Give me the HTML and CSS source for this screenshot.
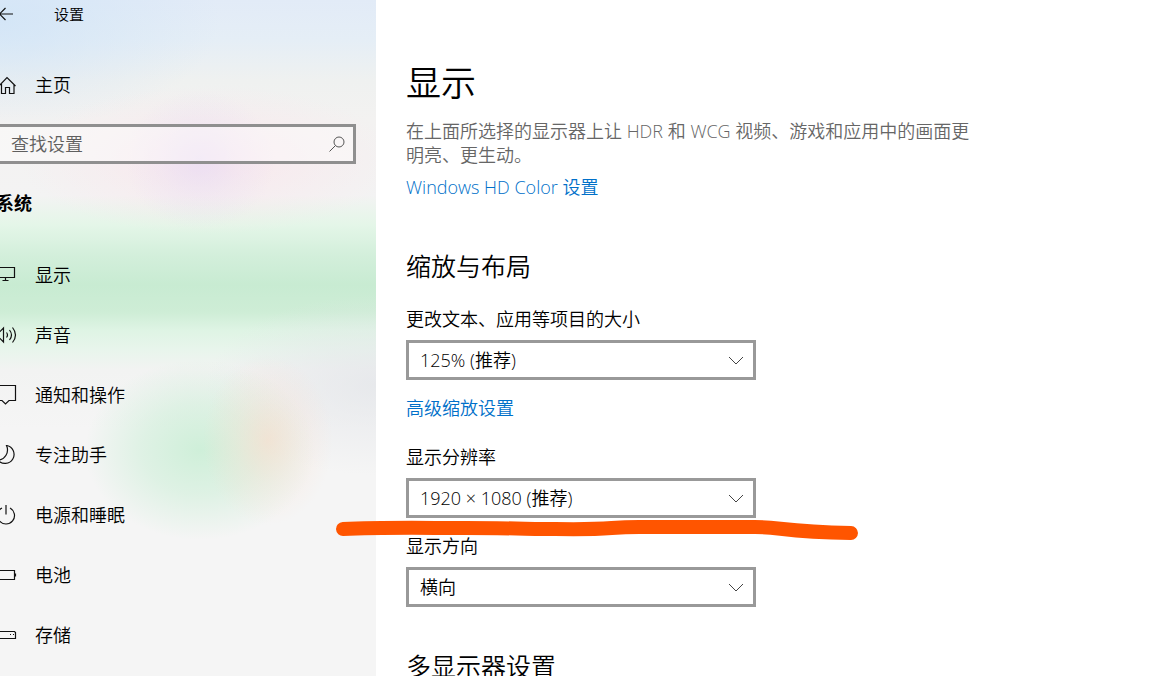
FILE: index.html
```html
<!DOCTYPE html>
<html lang="zh-CN">
<head>
    <meta charset="UTF-8">
    <meta name="viewport" content="width=device-width, initial-scale=1.0">
    <title>设置</title>
    <link rel="stylesheet" href="styles.css">
</head>
<body>

    <div class="window">
        <aside class="sidebar">
            <header class="titlebar">
                <button class="back-button" aria-label="返回">
                    <svg class="icon" viewBox="3 0 17 20"><path d="M16 10H2M8.500 4L2.500 10l6 6"/></svg>
                </button>
                <span class="app-title">设置</span>
            </header>

            <a class="nav-item home" href="#">
                <svg class="icon" viewBox="3 0 17 20"><path d="M2.500 10.500L10 2.500l8.500 8.500M4.500 9v9.500h4v-6h4v6h4.500V9.500"/></svg>
                <span>主页</span>
            </a>

            <div class="search">
                <input class="search-input" type="search" placeholder="查找设置" aria-label="查找设置">
                <svg class="search-icon" viewBox="0 0 16 16"><circle cx="10" cy="6" r="5"/><path d="M6.500 9.500L.5 15.500"/></svg>
            </div>

            <h2 class="section-title">系统</h2>

            <nav class="nav">
                <a class="nav-item" href="#">
                    <svg class="icon" viewBox="3 0 17 20"><path d="M0 2.500h17.500v10H0zM8.500 12.500v3M5.500 15.500h6"/></svg>
                    <span>显示</span>
                </a>
                <a class="nav-item" href="#">
                    <svg class="icon" viewBox="3 0 17 20"><path d="M0 7h2.500l4-4v14l-4-4H0M9.500 7.500q2 2.500 0 5M12.500 5q4 5 0 10M15.500 2.500q6 7.500 0 15"/></svg>
                    <span>声音</span>
                </a>
                <a class="nav-item" href="#">
                    <svg class="icon" viewBox="3 0 17 20"><path d="M0 .5h18.500v15H12l-3.500 3.500-3.500-3.500H0z"/></svg>
                    <span>通知和操作</span>
                </a>
                <a class="nav-item" href="#">
                    <svg class="icon" viewBox="3 0 17 20"><path d="M9.500 .5a9 9 0 1 1-8.500 14.500C8 15 12.500 7 9.500 .5z"/></svg>
                    <span>专注助手</span>
                </a>
                <a class="nav-item" href="#">
                    <svg class="icon" viewBox="3 0 17 20"><path d="M9 0v9.500M5 3a8.500 8.500 0 1 0 8 0"/></svg>
                    <span>电源和睡眠</span>
                </a>
                <a class="nav-item" href="#">
                    <svg class="icon" viewBox="3 0 17 20"><path d="M0 5.500h17.500v9H0zM18.500 8.500v3"/></svg>
                    <span>电池</span>
                </a>
                <a class="nav-item" href="#">
                    <svg class="icon" viewBox="3 0 17 20"><path d="M0 6.500h17.500l1 1v6H0M13 9.500h1M16 9.500h1"/></svg>
                    <span>存储</span>
                </a>
            </nav>
        </aside>

        <main class="content">
            <h1>显示</h1>
            <p class="description">在上面所选择的显示器上让 HDR 和 WCG 视频、游戏和应用中的画面更明亮、更生动。</p>
            <a class="link hd-link" href="#">Windows HD Color 设置</a>

            <h2>缩放与布局</h2>

            <label for="scale">更改文本、应用等项目的大小</label>
            <div class="select-box">
                <select id="scale">
                    <option>125% (推荐)</option>
                </select>
                <svg class="chevron" viewBox="0 0 16 10"><path d="M1 1l7 7 7-7"/></svg>
            </div>
            <a class="link scale-link" href="#">高级缩放设置</a>

            <label for="resolution">显示分辨率</label>
            <div class="select-box">
                <select id="resolution">
                    <option>1920 × 1080 (推荐)</option>
                </select>
                <svg class="chevron" viewBox="0 0 16 10"><path d="M1 1l7 7 7-7"/></svg>
                <!-- marker line under the resolution -->
                <svg class="marker" viewBox="0 0 524 24"><path d="M8 12C50 10 90 11 130 11S200 12 220 12C280 13 270 10 304 10H420C445 10 450 15 516 16"/></svg>
            </div>

            <label class="orientation-label" for="orientation">显示方向</label>
            <div class="select-box">
                <select id="orientation">
                    <option>横向</option>
                </select>
                <svg class="chevron" viewBox="0 0 16 10"><path d="M1 1l7 7 7-7"/></svg>
            </div>

            <h2 class="multi-title">多显示器设置</h2>
        </main>
    </div>

</body>
</html>
```
FILE: styles.css
```css
* {
    box-sizing: border-box;
}

body {
    margin: 0;
    font-family: "Open Sans", "Noto Sans CJK SC", sans-serif;
    font-size: 18px;
    font-weight: 350;
    line-height: 24px;
    color: #000;
    background-color: #fff;
}

.window {
    display: flex;
    height: 100vh;
    overflow: hidden;
}

h1, h2, p {
    margin: 0;
    font-weight: 350;
}

a {
    color: inherit;
    text-decoration: none;
}

/* sidebar */
.sidebar {
    flex: 0 0 376px;
    overflow: hidden;
    background:
        radial-gradient(ellipse 75px 70px at 200px 160px, rgba(226, 215, 246, 0.55), rgba(226, 215, 246, 0.2) 55%, rgba(226, 215, 246, 0)),
        radial-gradient(ellipse 190px 75px at 210px 160px, rgba(252, 226, 234, 0.7), rgba(252, 226, 234, 0.3) 55%, rgba(252, 226, 234, 0)),
        radial-gradient(ellipse 65px 85px at 268px 440px, rgba(250, 218, 200, 0.6), rgba(250, 218, 200, 0.25) 50%, rgba(250, 218, 200, 0)),
        radial-gradient(ellipse 115px 90px at 200px 450px, rgba(200, 238, 212, 0.85), rgba(200, 238, 212, 0.5) 50%, rgba(200, 238, 212, 0)),
        radial-gradient(ellipse 170px 90px at 376px 385px, rgba(228, 230, 234, 0.8), rgba(228, 230, 234, 0)),
        radial-gradient(ellipse 220px 110px at 0 20px, rgba(208, 228, 247, 0.8), rgba(208, 228, 247, 0.3) 60%, rgba(208, 228, 247, 0)),
        linear-gradient(#e2ebf7 0, #e5eef6 40px, #eff1f0 80px, #f3f2f1 120px, #f3f3f3 195px, #e4f6e8 225px, #d3efdb 255px, #c8ebd2 285px, #ceedd6 312px, #def4e4 330px, #e8f5ec 350px, #f2f3f2 370px, #f5f5f5 430px, #f5f5f5 100%);
}

.titlebar {
    display: flex;
    align-items: center;
    height: 28px;
    font-size: 15px;
}

.back-button {
    display: flex;
    width: 54px;
    padding: 0;
    border: none;
    background: none;
    cursor: pointer;
}

.icon {
    flex: none;
    width: 17px;
    height: 20px;
    fill: none;
    stroke: #111;
    stroke-width: 1.2;
}

.nav-item {
    display: flex;
    align-items: center;
    gap: 18px;
    height: 60px;
}

.home {
    margin-top: 27px;
}

.search {
    position: relative;
    margin: 9px 20px 0 -3px;
}

.search-input {
    display: block;
    width: 100%;
    height: 40px;
    padding: 0 40px 0 11px;
    border: 3px solid #8f8f8f;
    border-radius: 0;
    background-color: rgba(255, 255, 255, 0.4);
    font: inherit;
    outline: none;
}

.search-input::placeholder {
    color: #5f5f5f;
}

.search-icon {
    position: absolute;
    top: 12px;
    right: 11px;
    width: 16px;
    height: 16px;
    fill: none;
    stroke: #555;
}

.section-title {
    margin: 27px 0 30px -4px;
    font-size: 18px;
    font-weight: 700;
}

/* content */
.content {
    flex: 1;
    padding: 59px 30px 0;
}

.content h1 {
    font-size: 35px;
    line-height: 48px;
}

.content h2 {
    margin: 50px 0 24px;
    font-size: 25px;
    line-height: 34px;
}

.content .multi-title {
    margin-top: 42px;
}

.description {
    max-width: 570px;
    margin-top: 12px;
    color: #666;
}

.link {
    display: block;
    width: fit-content;
    color: #0070c9;
}

.hd-link {
    margin-top: 8px;
}

.scale-link {
    margin: 16px 0 25px;
}

label {
    display: block;
    margin-bottom: 9px;
}

.orientation-label {
    margin-top: 16px;
}

.select-box {
    position: relative;
    max-width: 350px;
}

select {
    display: block;
    width: 100%;
    height: 40px;
    padding: 0 40px 0 11px;
    border: 3px solid #999;
    border-radius: 0;
    background-color: #fff;
    color: #000;
    font: inherit;
    appearance: none;
}

.chevron {
    position: absolute;
    top: 16px;
    right: 12px;
    width: 16px;
    height: 10px;
    fill: none;
    stroke: #444;
    pointer-events: none;
}

.marker {
    position: absolute;
    top: 39px;
    left: -71px;
    width: 524px;
    height: 24px;
    fill: none;
    stroke: #ff5500;
    stroke-width: 14;
    stroke-linecap: round;
    pointer-events: none;
    z-index: 1;
}
```
